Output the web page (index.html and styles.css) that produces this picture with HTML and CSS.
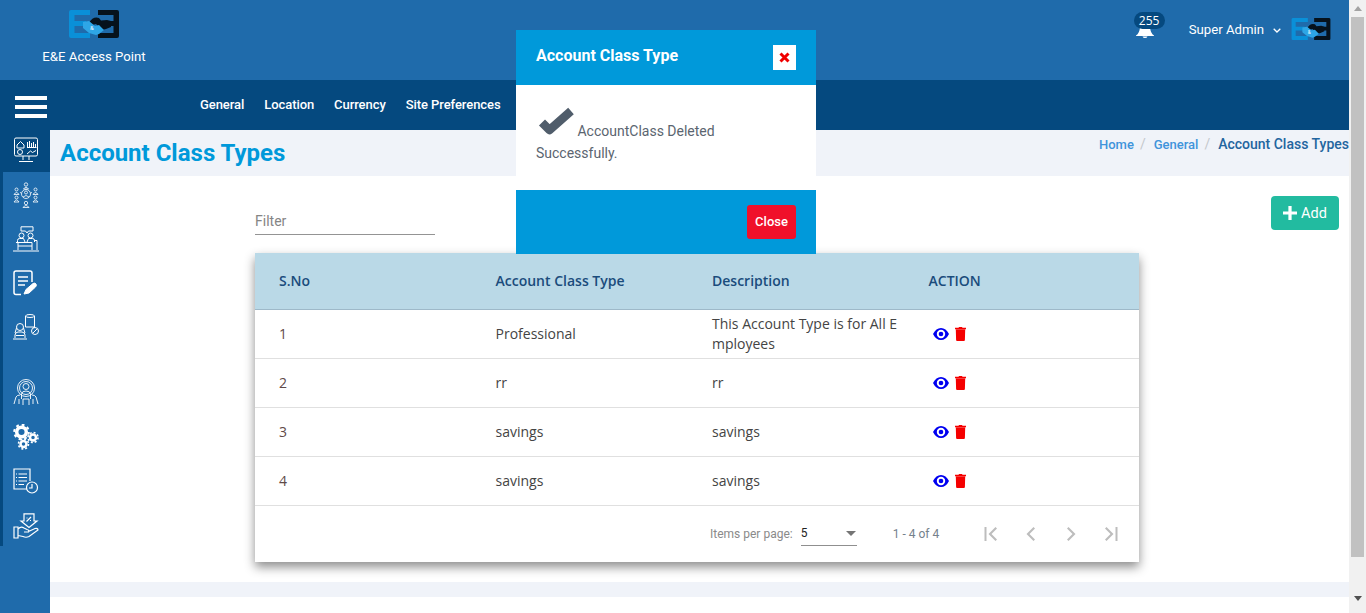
FILE: index.html
```html
<!DOCTYPE html>
<html lang="en">

<head>
    <meta charset="UTF-8">
    <meta name="viewport" content="width=device-width, initial-scale=1.0">
    <title>Account Class Types</title>
    <link rel="stylesheet" href="styles.css">
</head>

<body>
    <svg class="defs" width="0" height="0">
        <!-- company logo, used twice -->
        <symbol id="logo" viewBox="0 0 50 28">
            <path d="M2 0H21V5H5.500V11H17V16H5.500V23H21V28H2Q0 28 0 26V2Q0 0 2 0Z" fill="#0a90d8" />
            <path d="M29 0H48Q50 0 50 2V26Q50 28 48 28H29V23H44.500V16H38V11H44.500V5H29Z" fill="#06121c" />
            <path d="M20 13Q24 6 30 8L32 10.500L38 10L42 11V17L37 19L33 20L27 14L23 15Z" fill="#06121c" />
            <path d="M14 12L20 11L26 16L30 15L35 20L30 24L27 25L20 23L14 18Z" fill="#2ea6e6" />
        </symbol>
        <symbol id="eye" viewBox="0 0 16 12">
            <path fill-rule="evenodd" d="M8 0Q13 0 16 6Q13 12 8 12Q3 12 0 6Q3 0 8 0ZM8 1.800A4.200 4.200 0 1 0 8 10.200A4.200 4.200 0 1 0 8 1.800Z" fill="#0000f0" />
            <circle cx="8" cy="6" r="2.300" fill="#0000f0" />
        </symbol>
        <symbol id="trash" viewBox="0 0 11 14">
            <path d="M4 0H7L7.500 .8H11V2.200H0V.8H3.500ZM.8 2.600H10.200L9.900 13Q9.900 14 8.900 14H2.100Q1.100 14 1.100 13Z" fill="#f50000" />
        </symbol>
    </svg>

    <div class="page">
        <div class="main">
            <header class="topbar">
                <div class="brand">
                    <svg class="brand-logo" viewBox="0 0 50 28"><use href="#logo" /><text class="logo-amp" x="21" y="20">&amp;</text></svg>
                    <div class="brand-name">E&amp;E Access Point</div>
                </div>
                <div class="user-area">
                    <div class="bell">
                        <svg class="bell-icon" viewBox="0 0 18 11"><path d="M0 8.500Q3.500 6.500 4 0H14Q14.500 6.500 18 8.500V9H0ZM6.500 9.500H11.500Q11 11 9 11Q7 11 6.500 9.500Z" fill="#fff" /></svg>
                        <span class="bell-count">255</span>
                    </div>
                    <span class="user-name">Super Admin</span>
                    <svg class="chevron" viewBox="0 0 8 5"><path d="M.7.7L4 4L7.300.7" fill="none" stroke="#fff" stroke-width="1.300" /></svg>
                    <svg class="user-logo" viewBox="0 0 50 28"><use href="#logo" /><text class="logo-amp" x="21" y="20">&amp;</text></svg>
                </div>
            </header>

            <nav class="navbar">
                <div class="burger"><span></span><span></span><span></span></div>
                <ul class="nav-links">
                    <li>General</li>
                    <li>Location</li>
                    <li>Currency</li>
                    <li>Site Preferences</li>
                </ul>
            </nav>

            <div class="layout">
                <aside class="sidebar">
                    <div class="side-first">
                        <!-- dashboard monitor -->
                        <svg class="side-icon" viewBox="0 0 26 26" fill="none" stroke="#fff" stroke-width="1">
                            <rect x="1.500" y="1" width="23" height="18" rx="1.500" />
                            <path d="M10 19V23M16 19V23M6 24.500H20M4 8L7.500 4.500L11 8V11H4ZM14.500 10.500V5M16.500 10.500V4M18.500 10.500V6M20.500 10.500V5M22.500 10.500V7M14 10.500H23.500M14 17L17.500 14L19.500 15.500L23 13.500" />
                            <circle cx="7" cy="15" r="2.500" />
                        </svg>
                    </div>
                    <div class="side-group">
                        <div class="side-set">
                            <!-- people network -->
                            <svg class="side-icon" viewBox="0 0 26 26" fill="none" stroke="#fff" stroke-width=".8">
                                <circle cx="13" cy="2.500" r="1.700" />
                                <circle cx="13" cy="12" r="4.500" />
                                <circle cx="13" cy="10.500" r="1.500" />
                                <circle cx="13" cy="21" r="1.700" />
                                <circle cx="3.500" cy="7.500" r="1.500" />
                                <circle cx="22.500" cy="7.500" r="1.500" />
                                <circle cx="3.500" cy="15.500" r="1.500" />
                                <circle cx="22.500" cy="15.500" r="1.500" />
                                <path d="M1 12.500Q3.500 8.500 6 12.500ZM20 12.500Q22.500 8.500 25 12.500ZM1 20Q3.500 16 6 20ZM20 20Q22.500 16 25 20ZM10 25.500Q13 21.500 16 25.500ZM10.500 7Q13 3.500 15.500 7ZM10 15Q13 12 16 15M7 10.500L8.500 11M19 10.500L17.500 11" />
                            </svg>
                            <!-- meeting desk -->
                            <svg class="side-icon" viewBox="0 0 26 26" fill="none" stroke="#fff" stroke-width="1">
                                <path d="M8 .8H20V5H15.500L14 7L12.500 5H8Z" />
                                <circle cx="8.500" cy="9.500" r="2.500" />
                                <circle cx="17.500" cy="9.500" r="2.500" />
                                <path d="M4.500 16V14.500Q4.500 12.500 6.500 12.500H10.500L12 16M21.500 16V14.500Q21.500 12.500 19.500 12.500H15.500L14 16M3 16.500H19V24M5 16.500V24M21 14.500H24V24M0 25H26M5 20H19" />
                            </svg>
                            <!-- note and pen -->
                            <svg class="side-icon note-icon" viewBox="0 0 24 26" fill="none" stroke="#fff" stroke-width="1.500">
                                <path d="M8 24.500H3Q1 24.500 1 22.500V3Q1 1 3 1H17Q19 1 19 3V12" />
                                <path d="M5 7H15M5 11H15M5 15H12" stroke-width="1.700" />
                                <path d="M11 24L13 19.500L20 13.500Q22 12.500 23 14T22.500 17L16 23Z" fill="#fff" stroke-width="1" />
                            </svg>
                            <!-- staff and database -->
                            <svg class="side-icon" viewBox="0 0 26 26" fill="none" stroke="#fff" stroke-width="1">
                                <ellipse cx="17" cy="2" rx="4.500" ry="1.500" />
                                <path d="M12.500 2V13H21.500V2M21 13V14" />
                                <circle cx="22" cy="17" r="3.500" />
                                <path d="M20 19L24 15" />
                                <circle cx="7" cy="13" r="3.500" />
                                <path d="M2 24V21Q2 18.500 5 18H9Q12 18.500 12 21V24M0 25H14M3.500 14L2 19M10.500 14L12 19M3 21.500H11" />
                            </svg>
                        </div>
                        <div class="side-set lower">
                            <!-- team in a circle -->
                            <svg class="side-icon" viewBox="0 0 26 26" fill="none" stroke="#fff" stroke-width=".9">
                                <circle cx="13" cy="9" r="8.500" />
                                <circle cx="13" cy="9" r="6.500" />
                                <circle cx="13" cy="7.500" r="3" />
                                <path d="M8.500 20V15Q9 12 13 12Q17 12 17.500 15V20M10 26V20H16V26M1 25L3 18Q4 16 7 16M25 25L23 18Q22 16 19 16M6 25V20M20 25V20" />
                            </svg>
                            <!-- gears -->
                            <svg class="side-icon" viewBox="0 0 26 26" fill="none" stroke="#fff">
                                <circle cx="8.500" cy="8" r="4.800" stroke-width="3.500" />
                                <circle cx="8.500" cy="8" r="7.300" stroke-width="2" stroke-dasharray="2.800 2.930" />
                                <circle cx="20" cy="13.500" r="3" stroke-width="2.500" />
                                <circle cx="20" cy="13.500" r="5" stroke-width="1.600" stroke-dasharray="2 1.930" />
                                <circle cx="10.500" cy="20" r="3" stroke-width="2.500" />
                                <circle cx="10.500" cy="20" r="5" stroke-width="1.600" stroke-dasharray="2 1.930" />
                            </svg>
                            <!-- report with clock -->
                            <svg class="side-icon" viewBox="0 0 26 26" fill="none" stroke="#fff" stroke-width="1.200">
                                <path d="M14 21H1V1H17V13" />
                                <path d="M5.500 6H14M5.500 9.500H14M5.500 13H14M5.500 16.500H11M3 6H4M3 9.500H4M3 13H4M3 16.500H4" />
                                <circle cx="19" cy="19.500" r="5.500" fill="#1f6bab" />
                                <path d="M19 16V20H16" />
                            </svg>
                            <!-- hand with discount -->
                            <svg class="side-icon" viewBox="0 0 26 26" fill="none" stroke="#fff" stroke-width="1.200">
                                <path d="M11 .8H21V8H24L16 14.500L8 8H11Z" />
                                <path d="M13.500 8.500L18 4M13.500 5H14.500M17 7.500H18" />
                                <path d="M1 14H5V25H1ZM5 16Q8 13 11 15L14 16.500Q16.500 17 15.500 19H11M15.500 18.500L22 15.500Q25 15 25 17L16 23.500Q13 25 10 23.500L5 22.500" />
                            </svg>
                        </div>
                    </div>
                </aside>

                <main class="content">
                    <div class="title-bar">
                        <h1 class="page-title">Account Class Types</h1>
                        <ol class="crumbs">
                            <li class="crumb-link">Home</li>
                            <li class="crumb-sep">/</li>
                            <li class="crumb-link">General</li>
                            <li class="crumb-sep">/</li>
                            <li class="crumb-now">Account Class Types</li>
                        </ol>
                    </div>

                    <div class="work">
                        <div class="toolbar">
                            <div class="filter">Filter</div>
                            <button class="add-btn">
                                <svg class="plus" viewBox="0 0 13 13"><path d="M5 0H8V5H13V8H8V13H5V8H0V5H5Z" fill="#fff" /></svg>
                                Add
                            </button>
                        </div>

                        <div class="card">
                            <table class="grid">
                                <thead>
                                    <tr>
                                        <th>S.No</th>
                                        <th>Account Class Type</th>
                                        <th>Description</th>
                                        <th>ACTION</th>
                                    </tr>
                                </thead>
                                <tbody>
                                    <tr>
                                        <td>1</td>
                                        <td>Professional</td>
                                        <td class="desc">This Account Type is for All E<br>mployees</td>
                                        <td class="actions">
                                            <svg class="eye"><use href="#eye" /></svg><svg class="trash"><use href="#trash" /></svg>
                                        </td>
                                    </tr>
                                    <tr>
                                        <td>2</td>
                                        <td>rr</td>
                                        <td>rr</td>
                                        <td class="actions">
                                            <svg class="eye"><use href="#eye" /></svg><svg class="trash"><use href="#trash" /></svg>
                                        </td>
                                    </tr>
                                    <tr>
                                        <td>3</td>
                                        <td>savings</td>
                                        <td>savings</td>
                                        <td class="actions">
                                            <svg class="eye"><use href="#eye" /></svg><svg class="trash"><use href="#trash" /></svg>
                                        </td>
                                    </tr>
                                    <tr>
                                        <td>4</td>
                                        <td>savings</td>
                                        <td>savings</td>
                                        <td class="actions">
                                            <svg class="eye"><use href="#eye" /></svg><svg class="trash"><use href="#trash" /></svg>
                                        </td>
                                    </tr>
                                </tbody>
                            </table>

                            <div class="pager">
                                <span class="pager-label">Items per page:</span>
                                <div class="pager-select">
                                    <span>5</span>
                                    <i class="caret"></i>
                                </div>
                                <span class="pager-range">1 - 4 of 4</span>
                                <div class="pager-btns">
                                    <svg viewBox="0 0 16 16"><path d="M1.500 1V15H3.500V1ZM14 2.500L12.500 1L5.500 8L12.500 15L14 13.500L8.500 8Z" /></svg>
                                    <svg viewBox="0 0 16 16"><path d="M12 2.500L10.500 1L3.500 8L10.500 15L12 13.500L6.500 8Z" /></svg>
                                    <svg viewBox="0 0 16 16"><path d="M4 2.500L5.500 1L12.500 8L5.500 15L4 13.500L9.500 8Z" /></svg>
                                    <svg viewBox="0 0 16 16"><path d="M14.500 1V15H12.500V1ZM2 2.500L3.500 1L10.500 8L3.500 15L2 13.500L7.500 8Z" /></svg>
                                </div>
                            </div>
                        </div>
                    </div>

                    <div class="footer-strip"></div>
                    <div class="footer-space"></div>
                </main>
            </div>
        </div>

        <div class="scrollbar">
            <i class="arrow-up"></i>
            <div class="thumb"></div>
            <i class="arrow-down"></i>
        </div>
    </div>

    <!-- delete confirmation on top of the page -->
    <div class="modal">
        <div class="modal-head">
            <span class="modal-title">Account Class Type</span>
            <span class="modal-x">
                <svg viewBox="0 0 11 11"><path d="M1.500 1.500L9.500 9.500M9.500 1.500L1.500 9.500" stroke="#f00000" stroke-width="3" /></svg>
            </span>
        </div>
        <div class="modal-body">
            <svg class="check" viewBox="0 0 38 29"><path d="M6 15.500L13.500 23L35 4" fill="none" stroke="#505d6b" stroke-width="8.500" stroke-linejoin="round" /></svg>
            AccountClass Deleted Successfully.
        </div>
        <div class="modal-foot">
            <button class="close-btn">Close</button>
        </div>
    </div>
</body>

</html>
```

FILE: styles.css
```css
html,
body {
    margin: 0;
    padding: 0;
    height: 100%;
    overflow: hidden;
    background: #fff;
    font-family: Roboto, sans-serif;
}

.defs {
    position: absolute;
}

.page {
    display: flex;
    height: 613px;
    overflow: hidden;
}

.main {
    width: 1349px;
    flex-shrink: 0;
}

/* top blue bar */

.topbar {
    height: 80px;
    background: #1f6bab;
    display: flex;
    justify-content: space-between;
    color: #fff;
}

.brand {
    width: 188px;
    display: flex;
    flex-direction: column;
    align-items: center;
    padding-top: 10px;
    box-sizing: border-box;
}

.brand-logo {
    width: 50px;
    height: 28px;
    display: block;
}

.logo-amp {
    font-family: Roboto, sans-serif;
    font-size: 6px;
    fill: #fff;
}

.brand-name {
    font-size: 13.2px;
    line-height: 16px;
    margin-top: 11px;
}

.user-area {
    display: flex;
    align-items: flex-start;
    padding: 12px 18px 0 0;
}

.bell {
    position: relative;
    width: 31px;
    height: 28px;
}

.bell-icon {
    position: absolute;
    left: 2px;
    top: 15px;
    width: 18px;
    height: 11px;
}

.bell-count {
    position: absolute;
    left: 0;
    top: 0;
    width: 31px;
    height: 17px;
    line-height: 17px;
    border-radius: 9px;
    background: #05497f;
    font-family: "Open Sans", sans-serif;
    font-size: 12px;
    text-align: center;
}

.user-name {
    margin: 9px 0 0 24px;
    font-size: 13.2px;
    line-height: 17px;
}

.chevron {
    width: 8px;
    height: 5px;
    margin: 16px 0 0 9px;
}

.user-logo {
    width: 40px;
    height: 22px;
    margin: 6px 0 0 10px;
}

/* dark menu bar */

.navbar {
    height: 50px;
    background: #05497f;
    display: flex;
    align-items: center;
}

.burger {
    width: 32px;
    margin-left: 15px;
    display: flex;
    flex-direction: column;
    gap: 5px;
    margin-top: 3px;
}

.burger span {
    display: block;
    height: 4px;
    background: #fff;
}

.nav-links {
    display: flex;
    gap: 20px;
    list-style: none;
    margin: 0 0 0 153px;
    padding: 0;
    color: #fff;
    font-size: 13px;
    font-weight: 500;
    letter-spacing: -.07px;
    line-height: 48px;
}

/* left icon rail and page content */

.layout {
    display: flex;
    height: 483px;
}

.sidebar {
    width: 50px;
    background: #1f6bab;
    flex-shrink: 0;
}

.side-first {
    height: 42px;
    background: #05497f;
    padding: 7px 0 0 13px;
    box-sizing: border-box;
}

.side-icon {
    display: block;
    width: 26px;
    height: 26px;
}

.side-group {
    height: 374px;
    border-left: 3px solid #05497f;
    box-sizing: border-box;
    padding: 10px 0 0 10px;
}

.side-set {
    display: flex;
    flex-direction: column;
    gap: 18px;
}

.side-set.lower {
    margin-top: 39px;
    gap: 18.7px;
}

.note-icon {
    width: 24px;
}

.content {
    flex: 1;
    display: flex;
    flex-direction: column;
    min-width: 0;
}

.title-bar {
    height: 46px;
    background: #f0f3f9;
    display: flex;
    justify-content: space-between;
    flex-shrink: 0;
}

.page-title {
    margin: 6px 0 0 10px;
    font-size: 24px;
    line-height: 34px;
    font-weight: 700;
    color: #0099da;
}

.crumbs {
    display: flex;
    align-items: baseline;
    list-style: none;
    margin: 6px 0 0 0;
    padding: 0;
    font-size: 14px;
    line-height: 17px;
    font-weight: 500;
}

.crumb-link {
    color: #3f94db;
    font-size: 13px;
}

.crumb-sep {
    color: #c4c8cc;
    font-weight: 400;
    margin: 0 8px 0 6px;
}

.crumb-now {
    color: #23659f;
}

.work {
    height: 406px;
    box-sizing: border-box;
    padding: 20px 10px 0 205px;
    flex-shrink: 0;
}

.toolbar {
    display: flex;
    justify-content: space-between;
    height: 57px;
}

.filter {
    width: 180px;
    height: 39px;
    box-sizing: border-box;
    padding-top: 16px;
    border-bottom: 1px solid #949494;
    font-size: 14px;
    line-height: 18px;
    color: #858585;
}

.add-btn {
    width: 68px;
    height: 34px;
    border: 0;
    border-radius: 4px;
    background: #22bba0;
    color: #fff;
    font-family: Roboto, sans-serif;
    font-size: 14.5px;
    display: flex;
    align-items: center;
    justify-content: center;
    gap: 4px;
    padding: 0;
}

.plus {
    width: 14px;
    height: 14px;
}

/* table card */

.card {
    width: 884px;
    background: #fff;
    box-shadow: 0 5px 10px rgba(0, 0, 0, .45);
}

.grid {
    width: 100%;
    border-collapse: collapse;
    table-layout: fixed;
    font-family: "Open Sans", sans-serif;
    font-size: 14px;
}

.grid th {
    height: 56px;
    box-sizing: border-box;
    background: #bad9e7;
    color: #1a4c7c;
    font-weight: 600;
    text-align: left;
    padding: 0 0 0 24px;
    border-bottom: 1px solid #9eb9c9;
}

.grid th:nth-child(-n+3) {
    width: 216.5px;
}

.grid td {
    height: 48px;
    padding: 0 0 0 24px;
    color: #444;
    border-bottom: 1px solid #e0e0e0;
    line-height: 20px;
}

.grid td:first-child {
    color: #5f4a47;
}

.actions {
    white-space: nowrap;
}

.eye {
    width: 16px;
    height: 12px;
    margin: 0 6px 0 4px;
    vertical-align: -1px;
}

.trash {
    width: 11px;
    height: 14px;
    vertical-align: -2px;
}

.pager {
    height: 56px;
    display: flex;
    align-items: center;
    font-size: 12px;
    color: #8a8a8a;
}

.pager-label {
    margin-left: 455px;
}

.pager-select {
    width: 56px;
    height: 24px;
    margin-left: 8px;
    box-sizing: border-box;
    border-bottom: 1px solid #8f8f8f;
    display: flex;
    justify-content: space-between;
    align-items: center;
    color: #222;
}

.caret {
    width: 0;
    height: 0;
    margin-right: 1px;
    border-left: 5px solid transparent;
    border-right: 5px solid transparent;
    border-top: 5px solid #757575;
}

.pager-range {
    margin-left: 36px;
    color: #75818c;
}

.pager-btns {
    display: flex;
    gap: 24px;
    margin-left: 44px;
}

.pager-btns svg {
    width: 16px;
    height: 16px;
    fill: #bdbdbd;
}

.footer-strip {
    height: 15px;
    background: #f0f3f9;
    flex-shrink: 0;
}

.footer-space {
    flex: 1;
}

/* browser style scrollbar */

.scrollbar {
    width: 17px;
    background: #f1f1f1;
    display: flex;
    flex-direction: column;
    align-items: center;
}

.arrow-up,
.arrow-down {
    width: 0;
    height: 0;
    border-left: 4px solid transparent;
    border-right: 4px solid transparent;
}

.arrow-up {
    margin: 6px 0 6px;
    border-bottom: 5px solid #a3a3a3;
}

.arrow-down {
    margin-top: 39px;
    border-top: 5px solid #505050;
}

.thumb {
    width: 13px;
    height: 540px;
    background: #c1c1c1;
}

/* the message box */

.modal {
    position: absolute;
    left: 516px;
    top: 30px;
    width: 300px;
    height: 224px;
    background: #fff;
    display: flex;
    flex-direction: column;
}

.modal-head {
    height: 55px;
    box-sizing: border-box;
    background: #0099da;
    display: flex;
    align-items: center;
    justify-content: space-between;
    padding: 0 20px 0;
}

.modal-title {
    color: #fff;
    font-size: 16px;
    font-weight: 700;
    margin-bottom: 4px;
}

.modal-x {
    width: 23px;
    height: 25px;
    background: #fff;
    display: flex;
    align-items: center;
    justify-content: center;
}

.modal-x svg {
    width: 11px;
    height: 11px;
}

.modal-body {
    height: 105px;
    box-sizing: border-box;
    padding: 22px 20px 0;
    font-size: 14px;
    line-height: 22px;
    color: #5b6570;
}

.check {
    width: 38px;
    height: 29px;
}

.modal-foot {
    flex: 1;
    background: #0099da;
    display: flex;
    justify-content: flex-end;
    align-items: flex-start;
    padding: 15px 20px 0;
}

.close-btn {
    width: 49px;
    height: 34px;
    border: 0;
    border-radius: 3px;
    background: #f0102a;
    color: #fff;
    font-family: Roboto, sans-serif;
    font-size: 13px;
    font-weight: 500;
    padding: 0 0 2px;
}
```
